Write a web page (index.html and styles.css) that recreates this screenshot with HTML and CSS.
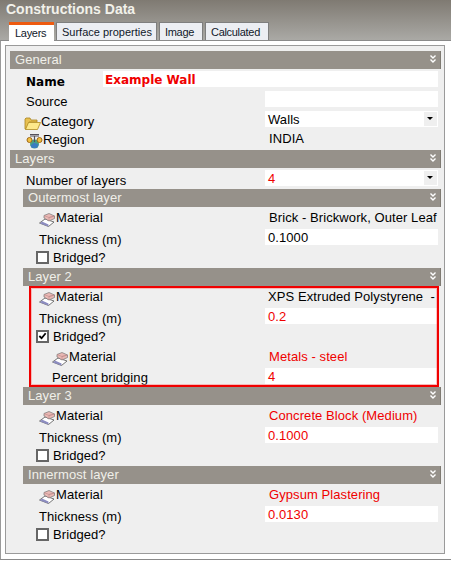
FILE: index.html
```html
<!DOCTYPE html>
<html lang="en">
<head>
  <meta charset="UTF-8">
  <title>Constructions Data</title>
  <link rel="stylesheet" href="styles.css">
</head>
<body>
  <svg class="defs" width="0" height="0">
    <symbol id="chevrons" viewBox="0 0 6 9">
      <path d="M0.5 0.5 L3 3 L5.5 0.5 M0.5 4.5 L3 7 L5.5 4.5" fill="none" stroke="#fff" stroke-width="1.4"/>
    </symbol>
    <symbol id="brick" viewBox="0 0 16 14">
      <path d="M0.5 10 L6 6 L15 9 L9.5 13.5 Z" fill="#fff" stroke="#555" stroke-width="0.8"/>
      <path d="M1 10.5 L9.5 13.5 L9.5 11.5 L3 8.5 Z" fill="#8c8cc0"/>
      <path d="M5 2.5 L10 0.5 L15.5 3 L15.5 5.5 L10 8 L5 5 Z" fill="#eab8b4" stroke="#777" stroke-width="0.7"/>
      <path d="M5 2.5 L10 4.5 L15.5 3 L10 4.5 L10 8" fill="none" stroke="#b88" stroke-width="0.6"/>
    </symbol>
  </svg>

  <div class="window-head">
    <div class="title">Constructions Data</div>
    <div class="tabs">
      <div class="tab active">Layers</div>
      <div class="tab surface">Surface properties</div>
      <div class="tab image">Image</div>
      <div class="tab calc">Calculated</div>
    </div>
  </div>

  <div class="outer">
    <div class="panel">
      <div class="head"><span>General</span><svg class="chev"><use href="#chevrons"/></svg></div>
      <div class="row has-input">
        <div class="label name">Name</div>
        <div class="value wide name-value">Example Wall</div>
      </div>
      <div class="row has-input">
        <div class="label">Source</div>
        <div class="value"></div>
      </div>
      <div class="row has-input">
        <div class="label icon-label folder-label">
          <svg class="folder" width="17" height="13" viewBox="0 0 17 13">
            <path d="M1 12 L1 2 L2 1 L6 1 L7 3 L13 3 L13 5 L5 5 L3 12 Z" fill="#e8c050" stroke="#a88420" stroke-width="0.8"/>
            <path d="M1.5 12.5 L4.5 5.5 L16.5 5.5 L13.5 12.5 Z" fill="#fde88a" stroke="#b08a20" stroke-width="0.8"/>
          </svg>Category
        </div>
        <div class="value select">Walls<span class="drop"></span></div>
      </div>
      <div class="row no-shift">
        <div class="label icon-label region-label">
          <svg class="region" width="17" height="16" viewBox="0 0 17 16">
            <circle cx="8.5" cy="11" r="4.5" fill="#4aa080"/>
            <path d="M4.5 12.5 L8 9.5 L12.5 11.5 L11 15 L6 15 Z" fill="#3a7cc0"/>
            <path d="M4 1.5 L13 1.5 M4 3 L13 3 M8.5 3 L8.5 9" stroke="#55505a" stroke-width="1.2" fill="none"/>
            <circle cx="3.5" cy="7" r="2.5" fill="#f0c040" stroke="#a06818" stroke-width="1"/>
            <circle cx="13.5" cy="7" r="2.5" fill="#f0c040" stroke="#a06818" stroke-width="1"/>
          </svg>Region
        </div>
        <div class="value plain">INDIA</div>
      </div>

      <div class="head"><span>Layers</span><svg class="chev"><use href="#chevrons"/></svg></div>
      <div class="row has-input">
        <div class="label">Number of layers</div>
        <div class="value select red">4<span class="drop"></span></div>
      </div>

      <div class="head sub"><span>Outermost layer</span><svg class="chev"><use href="#chevrons"/></svg></div>
      <div class="row">
        <div class="label material"><svg class="brick"><use href="#brick"/></svg>Material</div>
        <div class="value plain">Brick - Brickwork, Outer Leaf</div>
      </div>
      <div class="row has-input">
        <div class="label level1">Thickness (m)</div>
        <div class="value">0.1000</div>
      </div>
      <div class="row no-shift">
        <div class="label bridged"><span class="check"></span>Bridged?</div>
      </div>

      <div class="highlight">
        <div class="head sub"><span>Layer 2</span><svg class="chev"><use href="#chevrons"/></svg></div>
        <div class="row">
          <div class="label material"><svg class="brick"><use href="#brick"/></svg>Material</div>
          <div class="value plain tight">XPS Extruded Polystyrene &nbsp;-</div>
        </div>
        <div class="row has-input">
          <div class="label level1">Thickness (m)</div>
          <div class="value red">0.2</div>
        </div>
        <div class="row no-shift">
          <div class="label bridged">
            <span class="check">
              <svg width="10" height="10" viewBox="0 0 10 10"><path d="M1.5 5 L4 7.5 L8.5 2" fill="none" stroke="#000" stroke-width="2"/></svg>
            </span>Bridged?
          </div>
        </div>
        <div class="row">
          <div class="label material level2"><svg class="brick"><use href="#brick"/></svg>Material</div>
          <div class="value plain red">Metals - steel</div>
        </div>
        <div class="row has-input">
          <div class="label level2 percent">Percent bridging</div>
          <div class="value red">4</div>
        </div>
      </div>

      <div class="head sub"><span>Layer 3</span><svg class="chev"><use href="#chevrons"/></svg></div>
      <div class="row">
        <div class="label material"><svg class="brick"><use href="#brick"/></svg>Material</div>
        <div class="value plain red">Concrete Block (Medium)</div>
      </div>
      <div class="row has-input">
        <div class="label level1">Thickness (m)</div>
        <div class="value red">0.1000</div>
      </div>
      <div class="row no-shift">
        <div class="label bridged"><span class="check"></span>Bridged?</div>
      </div>

      <div class="head sub"><span>Innermost layer</span><svg class="chev"><use href="#chevrons"/></svg></div>
      <div class="row">
        <div class="label material"><svg class="brick"><use href="#brick"/></svg>Material</div>
        <div class="value plain red">Gypsum Plastering</div>
      </div>
      <div class="row has-input">
        <div class="label level1">Thickness (m)</div>
        <div class="value red">0.0130</div>
      </div>
      <div class="row no-shift">
        <div class="label bridged"><span class="check"></span>Bridged?</div>
      </div>
    </div>
  </div>
</body>
</html>
```

FILE: styles.css
```css
body {
  margin: 0;
  width: 451px;
  height: 561px;
  overflow: hidden;
  background-color: #ffffff;
  font-family: "Liberation Sans", Arial, sans-serif;
  font-size: 13px;
  letter-spacing: 0.08px;
  color: #000;
}
.defs {
  display: block;
}
.window-head {
  height: 40px;
  box-sizing: border-box;
  padding-left: 9px;
  background: linear-gradient(#7f7a72, #aaa9a5);
}
.title {
  height: 22px;
  margin-left: -3px;
  line-height: 19px;
  font-size: 14px;
  font-weight: bold;
  letter-spacing: 0;
  color: #f2f1ea;
}
.tabs {
  display: flex;
  gap: 2px;
}
.tab {
  height: 18px;
  box-sizing: border-box;
  padding: 0 5px;
  border: 1px solid #7e7e7e;
  border-bottom: none;
  background-color: #eceef3;
  font-size: 11px;
  letter-spacing: -0.3px;
  line-height: 18px;
  white-space: nowrap;
  color: #10182a;
}
.tab.active {
  position: relative;
  width: 45px;
  height: 19px;
  border: none;
  border-top: 3px solid #ee5a10;
  padding-left: 6px;
  background-color: #fff;
  line-height: 16px;
  z-index: 1;
}
.tab.surface {
  width: 101px;
  letter-spacing: 0;
}
.tab.image {
  width: 44px;
}
.tab.calc {
  width: 64px;
}
.outer {
  height: 520px;
  box-sizing: border-box;
  padding: 4px 6px 6px 4px;
  border-top: 1px solid #8a8a8a;
  border-left: 2px solid #9a9a9a;
  border-bottom: 1px solid #8a8a8a;
  margin-left: -1px;
  background-color: #fff;
}
.panel {
  height: 509px;
  box-sizing: border-box;
  padding: 5px 3px 0 4px;
  border: 1px solid #9a9a9a;
  background-color: #efefef;
}
.head {
  display: flex;
  align-items: center;
  justify-content: space-between;
  height: 18px;
  box-sizing: border-box;
  margin-top: 1px;
  padding: 0 4px 1px 5px;
  border-right: 1px solid #7e7a72;
  background-color: #96918a;
  line-height: 17px;
  color: #f0efe9;
}
.panel > .head:first-child {
  margin-top: 0;
}
.head.sub {
  margin-left: 13px;
}
.chev {
  width: 6px;
  height: 9px;
}
.row {
  display: flex;
  align-items: flex-start;
  height: 20px;
  margin-right: 3px;
}
.label {
  flex: 1;
  display: flex;
  align-items: center;
  height: 20px;
  box-sizing: border-box;
  padding-top: 1px;
  padding-left: 16px;
  white-space: nowrap;
}
.has-input .label {
  padding-top: 5px;
}
.has-input .percent {
  padding-top: 3px;
}
.no-shift .label {
  padding-top: 0;
}
.name {
  font-family: "DejaVu Sans", sans-serif;
  font-size: 12px;
  font-weight: bold;
  letter-spacing: 0;
}
.value {
  position: relative;
  width: 173px;
  height: 16px;
  box-sizing: border-box;
  margin-top: 2px;
  padding: 1px 3px 0;
  background-color: #fff;
  line-height: 16px;
  white-space: nowrap;
  overflow: hidden;
}
.value.wide {
  position: absolute;
  left: 103px;
  width: 335px;
}
.name-value {
  padding-left: 2px;
  font-family: "DejaVu Sans", sans-serif;
  font-size: 12px;
  font-weight: bold;
  letter-spacing: 0;
  color: #f00000;
}
.value.plain {
  padding-left: 4px;
  background-color: transparent;
  overflow: visible;
}
.no-shift .value.plain {
  padding-top: 0;
}
.value.plain.tight {
  padding-left: 3px;
}
.red {
  color: #f00000;
}
.drop {
  position: absolute;
  top: 1px;
  right: 1px;
  width: 13px;
  height: 14px;
  background-color: #efefef;
}
.drop::after {
  content: "";
  position: absolute;
  top: 5px;
  left: 3px;
  border-top: 3px solid #000;
  border-left: 3.5px solid transparent;
  border-right: 3.5px solid transparent;
}
.icon-label {
  padding-left: 14px;
}
.region-label {
  padding-left: 16px;
}
.folder {
  margin-top: 3px;
  flex: none;
}
.region {
  margin-top: 4px;
  flex: none;
}
.level1 {
  padding-left: 29px;
}
.material {
  padding-left: 29px;
}
.level2,
.has-input .level2 {
  padding-left: 42px;
}
.brick {
  width: 16px;
  height: 14px;
  margin: 4px 1px 0 0;
  flex: none;
}
.bridged {
  padding-left: 26px;
}
.check {
  display: flex;
  align-items: center;
  justify-content: center;
  width: 13px;
  height: 13px;
  box-sizing: border-box;
  margin-right: 4px;
  border: 2px solid #666;
  background-color: #fff;
}
.highlight {
  position: relative;
}
.highlight::after {
  content: "";
  position: absolute;
  top: 18px;
  left: 19px;
  right: 2px;
  bottom: -1px;
  border: 2px solid #f00000;
  box-shadow: inset 0 0 0 1px rgba(255, 120, 120, 0.45);
}
```
